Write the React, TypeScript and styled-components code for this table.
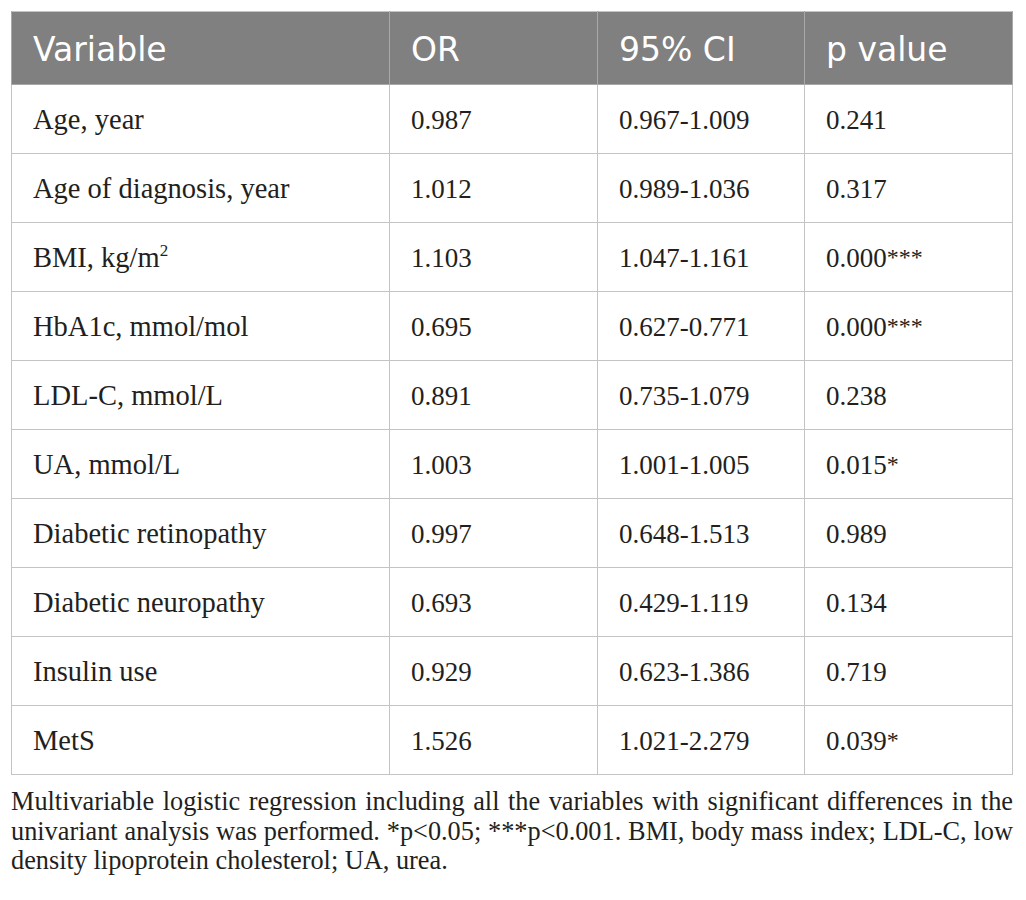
import { FC } from "react";
import styled, { createGlobalStyle } from "styled-components";

interface Row {
  variable: string;
  sup?: string;
  or: string;
  ci: string;
  p: string;
  stars?: string;
}

const rows: Row[] = [
  { variable: "Age, year", or: "0.987", ci: "0.967-1.009", p: "0.241" },
  { variable: "Age of diagnosis, year", or: "1.012", ci: "0.989-1.036", p: "0.317" },
  { variable: "BMI, kg/m", sup: "2", or: "1.103", ci: "1.047-1.161", p: "0.000", stars: "***" },
  { variable: "HbA1c, mmol/mol", or: "0.695", ci: "0.627-0.771", p: "0.000", stars: "***" },
  { variable: "LDL-C, mmol/L", or: "0.891", ci: "0.735-1.079", p: "0.238" },
  { variable: "UA, mmol/L", or: "1.003", ci: "1.001-1.005", p: "0.015", stars: "*" },
  { variable: "Diabetic retinopathy", or: "0.997", ci: "0.648-1.513", p: "0.989" },
  { variable: "Diabetic neuropathy", or: "0.693", ci: "0.429-1.119", p: "0.134" },
  { variable: "Insulin use", or: "0.929", ci: "0.623-1.386", p: "0.719" },
  { variable: "MetS", or: "1.526", ci: "1.021-2.279", p: "0.039", stars: "*" },
];

const columns = [
  { label: "Variable", width: 378 },
  { label: "OR", width: 208 },
  { label: "95% CI", width: 207 },
  { label: "p value", width: 208 },
];

/**
 * Regression results table with its footnote
 *
 * @returns {React.ReactElement} table page
 */
const App: FC = () => {
  return (
    <>
      <GlobalStyle />
      <Page>
        <Table>
          <colgroup>
            {columns.map((c) => (
              <col key={c.label} style={{ width: c.width }} />
            ))}
          </colgroup>
          <thead>
            <tr>
              {columns.map((c) => (
                <HeadCell key={c.label}>{c.label}</HeadCell>
              ))}
            </tr>
          </thead>
          <tbody>
            {rows.map((r) => (
              <tr key={r.variable}>
                <Cell $text>
                  {r.variable}
                  {r.sup && <Sup>{r.sup}</Sup>}
                </Cell>
                <Cell>{r.or}</Cell>
                <Cell>{r.ci}</Cell>
                <Cell>
                  {r.p}
                  {r.stars && <Stars>{r.stars}</Stars>}
                </Cell>
              </tr>
            ))}
          </tbody>
        </Table>
        <Caption>
          Multivariable logistic regression including all the variables with
          significant differences in the univariant analysis was performed.
          *p&lt;0.05; ***p&lt;0.001. BMI, body mass index; LDL-C, low density
          lipoprotein cholesterol; UA, urea.
        </Caption>
      </Page>
    </>
  );
};

export default App;

const GlobalStyle = createGlobalStyle`
  html, body {
    margin: 0;
    padding: 0;
    background: #ffffff;
  }
`;

const Page = styled.div`
  padding: 11px 0 0 11px;
  width: 1002px;
  font-family: "Liberation Serif", "Times New Roman", serif;
  color: #231f20;
`;

const Table = styled.table`
  border-collapse: collapse;
  table-layout: fixed;
  width: 1001px;
  border: 1px solid #c4c4c4;
`;

const HeadCell = styled.th`
  height: 73px;
  box-sizing: border-box;
  padding: 2px 0 0 21px;
  background: #808080;
  color: #ffffff;
  text-align: left;
  font-family: "DejaVu Sans", "Open Sans", sans-serif;
  font-weight: normal;
  font-size: 33px;
  border: 1px solid #a8a8a8;
  border-top: none;
`;

const Cell = styled.td<{ $text?: boolean }>`
  height: 69px;
  box-sizing: border-box;
  padding: 2px 0 0 21px;
  font-size: ${(p) => (p.$text ? "28.5px" : "27px")};
  border: 1px solid #c4c4c4;
  vertical-align: middle;
  white-space: nowrap;
`;

const Sup = styled.sup`
  font-size: 17px;
  line-height: 0;
  vertical-align: 11px;
`;

const Stars = styled.span`
  font-size: 24px;
  vertical-align: 2px;
`;

const Caption = styled.p`
  margin: 12px 0 0 0;
  font-size: 26.3px;
  line-height: 29.5px;
  text-align: justify;
`;
